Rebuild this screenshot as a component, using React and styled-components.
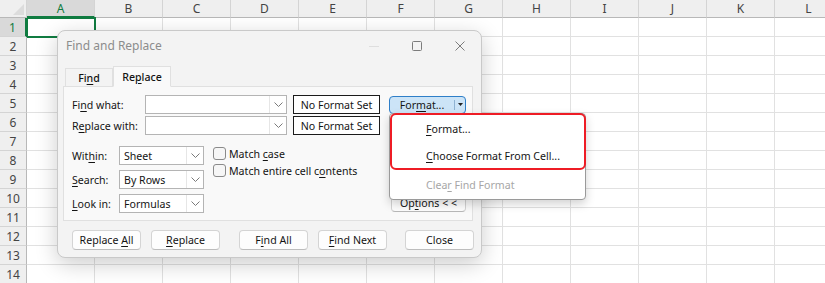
import React from 'react'
import styled, { createGlobalStyle } from 'styled-components'

const GlobalStyle = createGlobalStyle`
  body {
    margin: 0;
    background: #fff;
  }
`

const COLUMNS = ['A', 'B', 'C', 'D', 'E', 'F', 'G', 'H', 'I', 'J', 'K', 'L']
const ROWS = Array.from({ length: 14 }, (_, i) => i + 1)

const Chevron = () => (
  <svg width="9" height="5" viewBox="0 0 9 5">
    <path d="M0.5 0.5 L4.5 4.5 L8.5 0.5" fill="none" stroke="#7a7a7a" strokeWidth="1" />
  </svg>
)

// text with one underlined access key, kept in one inline box
const Key = ({ before = '', k, after = '' }) => (
  <span>
    {before}
    <U>{k}</U>
    {after}
  </span>
)

const App = () => {
  return (
    <Page>
      <GlobalStyle />
      <Sheet>
        <Corner />
        {COLUMNS.map((c) => (
          <ColHead key={c} $active={c === 'A'}>
            {c}
          </ColHead>
        ))}
        {ROWS.map((r) => (
          <React.Fragment key={r}>
            <RowHead $active={r === 1}>{r}</RowHead>
            {COLUMNS.map((c) => (
              <Cell key={c} $selected={r === 1 && c === 'A'} />
            ))}
          </React.Fragment>
        ))}
      </Sheet>

      <Dialog>
        <TitleBar>
          <Title>Find and Replace</Title>
          <Controls>
            <WinButton>
              <svg width="10" height="10" viewBox="0 0 10 10">
                <path d="M0 5.5 H10" stroke="#dedede" strokeWidth="1" />
              </svg>
            </WinButton>
            <WinButton>
              <svg width="10" height="10" viewBox="0 0 10 10">
                <rect x="0.5" y="0.5" width="9" height="9" rx="1" fill="none" stroke="#7c7c7c" strokeWidth="1" />
              </svg>
            </WinButton>
            <WinButton>
              <svg width="10" height="10" viewBox="0 0 10 10">
                <path d="M0.5 0.5 L9.5 9.5 M9.5 0.5 L0.5 9.5" stroke="#7c7c7c" strokeWidth="1" />
              </svg>
            </WinButton>
          </Controls>
        </TitleBar>

        <Tabs>
          <Tab>
            <Key before="Fi" k="n" after="d" />
          </Tab>
          <Tab $selected>
            <Key before="Re" k="p" after="lace" />
          </Tab>
        </Tabs>

        <Panel>
          <FieldRow>
            <Label $width={73}>
              <Key before="Fi" k="n" after="d what:" />
            </Label>
            <Combo $width={142}>
              <ComboText />
              <ComboArrow>
                <Chevron />
              </ComboArrow>
            </Combo>
            <FormatBox>No Format Set</FormatBox>
            <FormatButton>
              <FormatMain>
                <Key before="For" k="m" after="at..." />
              </FormatMain>
              <FormatArrow>
                <svg width="5" height="3" viewBox="0 0 5 3">
                  <path d="M0 0 H5 L2.5 3 Z" fill="#222" />
                </svg>
              </FormatArrow>
            </FormatButton>
          </FieldRow>
          <FieldRow $top={2}>
            <Label $width={73}>
              <Key before="R" k="e" after="place with:" />
            </Label>
            <Combo $width={142}>
              <ComboText />
              <ComboArrow>
                <Chevron />
              </ComboArrow>
            </Combo>
            <FormatBox>No Format Set</FormatBox>
          </FieldRow>

          <Options>
            <Selects>
              <FieldRow>
                <Label $width={47}>
                  <Key before="Wit" k="h" after="in:" />
                </Label>
                <Combo $width={85}>
                  <ComboText>Sheet</ComboText>
                  <ComboArrow>
                    <Chevron />
                  </ComboArrow>
                </Combo>
              </FieldRow>
              <FieldRow>
                <Label $width={47}>
                  <Key k="S" after="earch:" />
                </Label>
                <Combo $width={85}>
                  <ComboText>By Rows</ComboText>
                  <ComboArrow>
                    <Chevron />
                  </ComboArrow>
                </Combo>
              </FieldRow>
              <FieldRow>
                <Label $width={47}>
                  <Key k="L" after="ook in:" />
                </Label>
                <Combo $width={85}>
                  <ComboText>Formulas</ComboText>
                  <ComboArrow>
                    <Chevron />
                  </ComboArrow>
                </Combo>
              </FieldRow>
            </Selects>
            <Checks>
              <CheckRow>
                <CheckBox />
                <Key before="Match " k="c" after="ase" />
              </CheckRow>
              <CheckRow>
                <CheckBox />
                <Key before="Match entire cell c" k="o" after="ntents" />
              </CheckRow>
            </Checks>
            <OptionsButton>
              <Key before="Op" k="t" after="ions < <" />
            </OptionsButton>
          </Options>
        </Panel>

        <Footer>
          <Button>
            <Key before="Replace " k="A" after="ll" />
          </Button>
          <Button $gap={10}>
            <Key k="R" after="eplace" />
          </Button>
          <Button $gap={19}>
            <Key before="F" k="i" after="nd All" />
          </Button>
          <Button $gap={10}>
            <Key k="F" after="ind Next" />
          </Button>
          <Button $gap={18}>Close</Button>
        </Footer>
      </Dialog>

      <Menu>
        <MenuItem>
          <Key k="F" after="ormat..." />
        </MenuItem>
        <MenuItem>
          <Key k="C" after="hoose Format From Cell..." />
        </MenuItem>
        <MenuItem $disabled $top={2}>
          <Key before="Clea" k="r" after=" Find Format" />
        </MenuItem>
        <Highlight />
      </Menu>
    </Page>
  )
}

const Page = styled.div`
  position: relative;
  width: 825px;
  height: 283px;
  overflow: hidden;
  background: #fff;
  font-family: 'Noto Sans', 'Segoe UI', sans-serif;
`

const Sheet = styled.div`
  display: grid;
  grid-template-columns: 27px repeat(12, 68px);
  grid-template-rows: 18px repeat(14, 19px);
`

const Corner = styled.div`
  position: relative;
  background: #efefef;
  border-right: 1px solid #d4d4d4;
  border-bottom: 1px solid #b8b8b8;

  &::after {
    content: '';
    position: absolute;
    right: 2px;
    bottom: 2px;
    border-left: 11px solid transparent;
    border-bottom: 11px solid #dcdcdc;
  }
`

const ColHead = styled.div`
  display: flex;
  align-items: center;
  justify-content: center;
  background: ${(p) => (p.$active ? '#d9d9d9' : '#efefef')};
  color: ${(p) => (p.$active ? '#107c41' : '#444')};
  border-right: 1px solid #d4d4d4;
  border-bottom: ${(p) => (p.$active ? '2px solid #107c41' : '1px solid #b8b8b8')};
  font-size: 12px;
`

const RowHead = styled.div`
  display: flex;
  align-items: center;
  justify-content: center;
  background: ${(p) => (p.$active ? '#d9d9d9' : '#efefef')};
  color: ${(p) => (p.$active ? '#107c41' : '#444')};
  border-right: ${(p) => (p.$active ? '2px solid #107c41' : '1px solid #b8b8b8')};
  border-bottom: 1px solid #d4d4d4;
  font-size: 12px;
`

const Cell = styled.div`
  border-right: 1px solid #e1e1e1;
  border-bottom: 1px solid #e1e1e1;
  outline: ${(p) => (p.$selected ? '2px solid #107c41' : 'none')};
  outline-offset: -1px;
`

const Dialog = styled.div`
  position: absolute;
  left: 57px;
  top: 30px;
  width: 425px;
  height: 228px;
  box-sizing: border-box;
  display: flex;
  flex-direction: column;
  background: #f3f3f3;
  border: 1px solid #c9c9c9;
  border-radius: 8px;
  box-shadow: 0 6px 22px rgba(0, 0, 0, 0.2);
  font-size: 10.6px;
  color: #141414;
`

const TitleBar = styled.div`
  display: flex;
  align-items: center;
  height: 29px;
  padding: 0 0 1px 8px;
`

const Title = styled.div`
  flex: 1;
  font-size: 12px;
  color: #8c8c8c;
`

const Controls = styled.div`
  display: flex;
  align-self: stretch;
`

const WinButton = styled.div`
  display: flex;
  align-items: center;
  justify-content: center;
  width: 43px;
`

const Tabs = styled.div`
  display: flex;
  align-items: flex-end;
  height: 25px;
  padding-left: 7px;
  position: relative;
  z-index: 1;
`

const Tab = styled.div`
  display: flex;
  align-items: center;
  justify-content: center;
  box-sizing: border-box;
  width: ${(p) => (p.$selected ? 58 : 48)}px;
  height: ${(p) => (p.$selected ? 21 : 19)}px;
  background: ${(p) => (p.$selected ? '#f9f9f9' : '#f3f3f3')};
  border: 1px solid #e0e0e0;
  border-bottom: ${(p) => (p.$selected ? '1px solid #f9f9f9' : '1px solid #e0e0e0')};
  margin-bottom: -1px;
  font-weight: 500;
`

const Panel = styled.div`
  box-sizing: border-box;
  height: 135px;
  margin: 0 8px 0 5px;
  padding: 8px 6px 0 8px;
  background: #f9f9f9;
  border: 1px solid #e0e0e0;
`

const FieldRow = styled.div`
  display: flex;
  align-items: center;
  height: 19px;
  margin-top: ${(p) => p.$top || 0}px;
`

const Label = styled.div`
  width: ${(p) => p.$width}px;
  flex-shrink: 0;
`

const U = styled.span`
  text-decoration: underline;
  text-underline-offset: 2px;
`

const Combo = styled.div`
  display: flex;
  box-sizing: border-box;
  width: ${(p) => p.$width}px;
  height: 19px;
  background: #fff;
  border: 1px solid #b4b4b4;
`

const ComboText = styled.div`
  flex: 1;
  display: flex;
  align-items: center;
  padding-left: 4px;
`

const ComboArrow = styled.div`
  display: flex;
  align-items: center;
  justify-content: center;
  width: 16px;
  border-left: 1px solid #e6e6e6;
`

const FormatBox = styled.div`
  display: flex;
  align-items: center;
  justify-content: center;
  box-sizing: border-box;
  width: 87px;
  height: 19px;
  margin-left: 6px;
  background: #fff;
  border: 1px solid #1b1b1b;
`

const FormatButton = styled.div`
  display: flex;
  box-sizing: border-box;
  width: 77px;
  height: 18px;
  margin-left: auto;
  background: #cce4f7;
  border: 1px solid #2f7fc8;
  border-radius: 4px;
`

const FormatMain = styled.div`
  flex: 1;
  display: flex;
  align-items: center;
  justify-content: center;
`

const FormatArrow = styled.div`
  display: flex;
  align-items: center;
  justify-content: center;
  width: 10px;
  margin: 3px 0;
  border-left: 1px solid #8fb3d3;
`

const Options = styled.div`
  display: flex;
  align-items: flex-start;
  margin-top: 11px;
`

const Selects = styled.div`
  display: flex;
  flex-direction: column;
  gap: 5px;
`

const Checks = styled.div`
  display: flex;
  flex-direction: column;
  gap: 4px;
  margin: 1px 0 0 9px;
`

const CheckRow = styled.div`
  display: flex;
  align-items: center;
  gap: 3px;
  height: 13px;
`

const CheckBox = styled.div`
  box-sizing: border-box;
  width: 13px;
  height: 13px;
  background: #f6f6f6;
  border: 1px solid #8a8a8a;
  border-radius: 3px;
`

const OptionsButton = styled.div`
  display: flex;
  align-items: center;
  justify-content: center;
  box-sizing: border-box;
  width: 75px;
  height: 19px;
  margin: 47px 0 0 auto;
  background: #fdfdfd;
  border: 1px solid #d2d2d2;
  border-bottom-color: #b8b8b8;
  border-radius: 4px;
`

const Footer = styled.div`
  display: flex;
  margin-top: 9px;
  padding-left: 14px;
`

const Button = styled.div`
  display: flex;
  align-items: center;
  justify-content: center;
  box-sizing: border-box;
  width: 69px;
  height: 20px;
  margin-left: ${(p) => p.$gap || 0}px;
  background: #fdfdfd;
  border: 1px solid #d4d4d4;
  border-bottom-color: #bdbdbd;
  border-radius: 4px;
`

const Menu = styled.div`
  position: absolute;
  left: 389px;
  top: 113px;
  width: 197px;
  box-sizing: border-box;
  padding: 1px 0;
  background: #fff;
  border: 1px solid #9a9a9a;
  border-radius: 4px;
  box-shadow: 0 4px 10px rgba(0, 0, 0, 0.18);
  font-size: 10.6px;
  color: #141414;
`

const MenuItem = styled.div`
  display: flex;
  align-items: center;
  height: 27px;
  margin-top: ${(p) => p.$top || 0}px;
  padding-left: 36px;
  color: ${(p) => (p.$disabled ? '#a6a6a6' : '#141414')};
`

const Highlight = styled.div`
  position: absolute;
  left: 0;
  top: -1px;
  right: -1px;
  height: 57px;
  box-sizing: border-box;
  border: 2px solid #ee1c25;
  border-radius: 6px;
`

export default App
